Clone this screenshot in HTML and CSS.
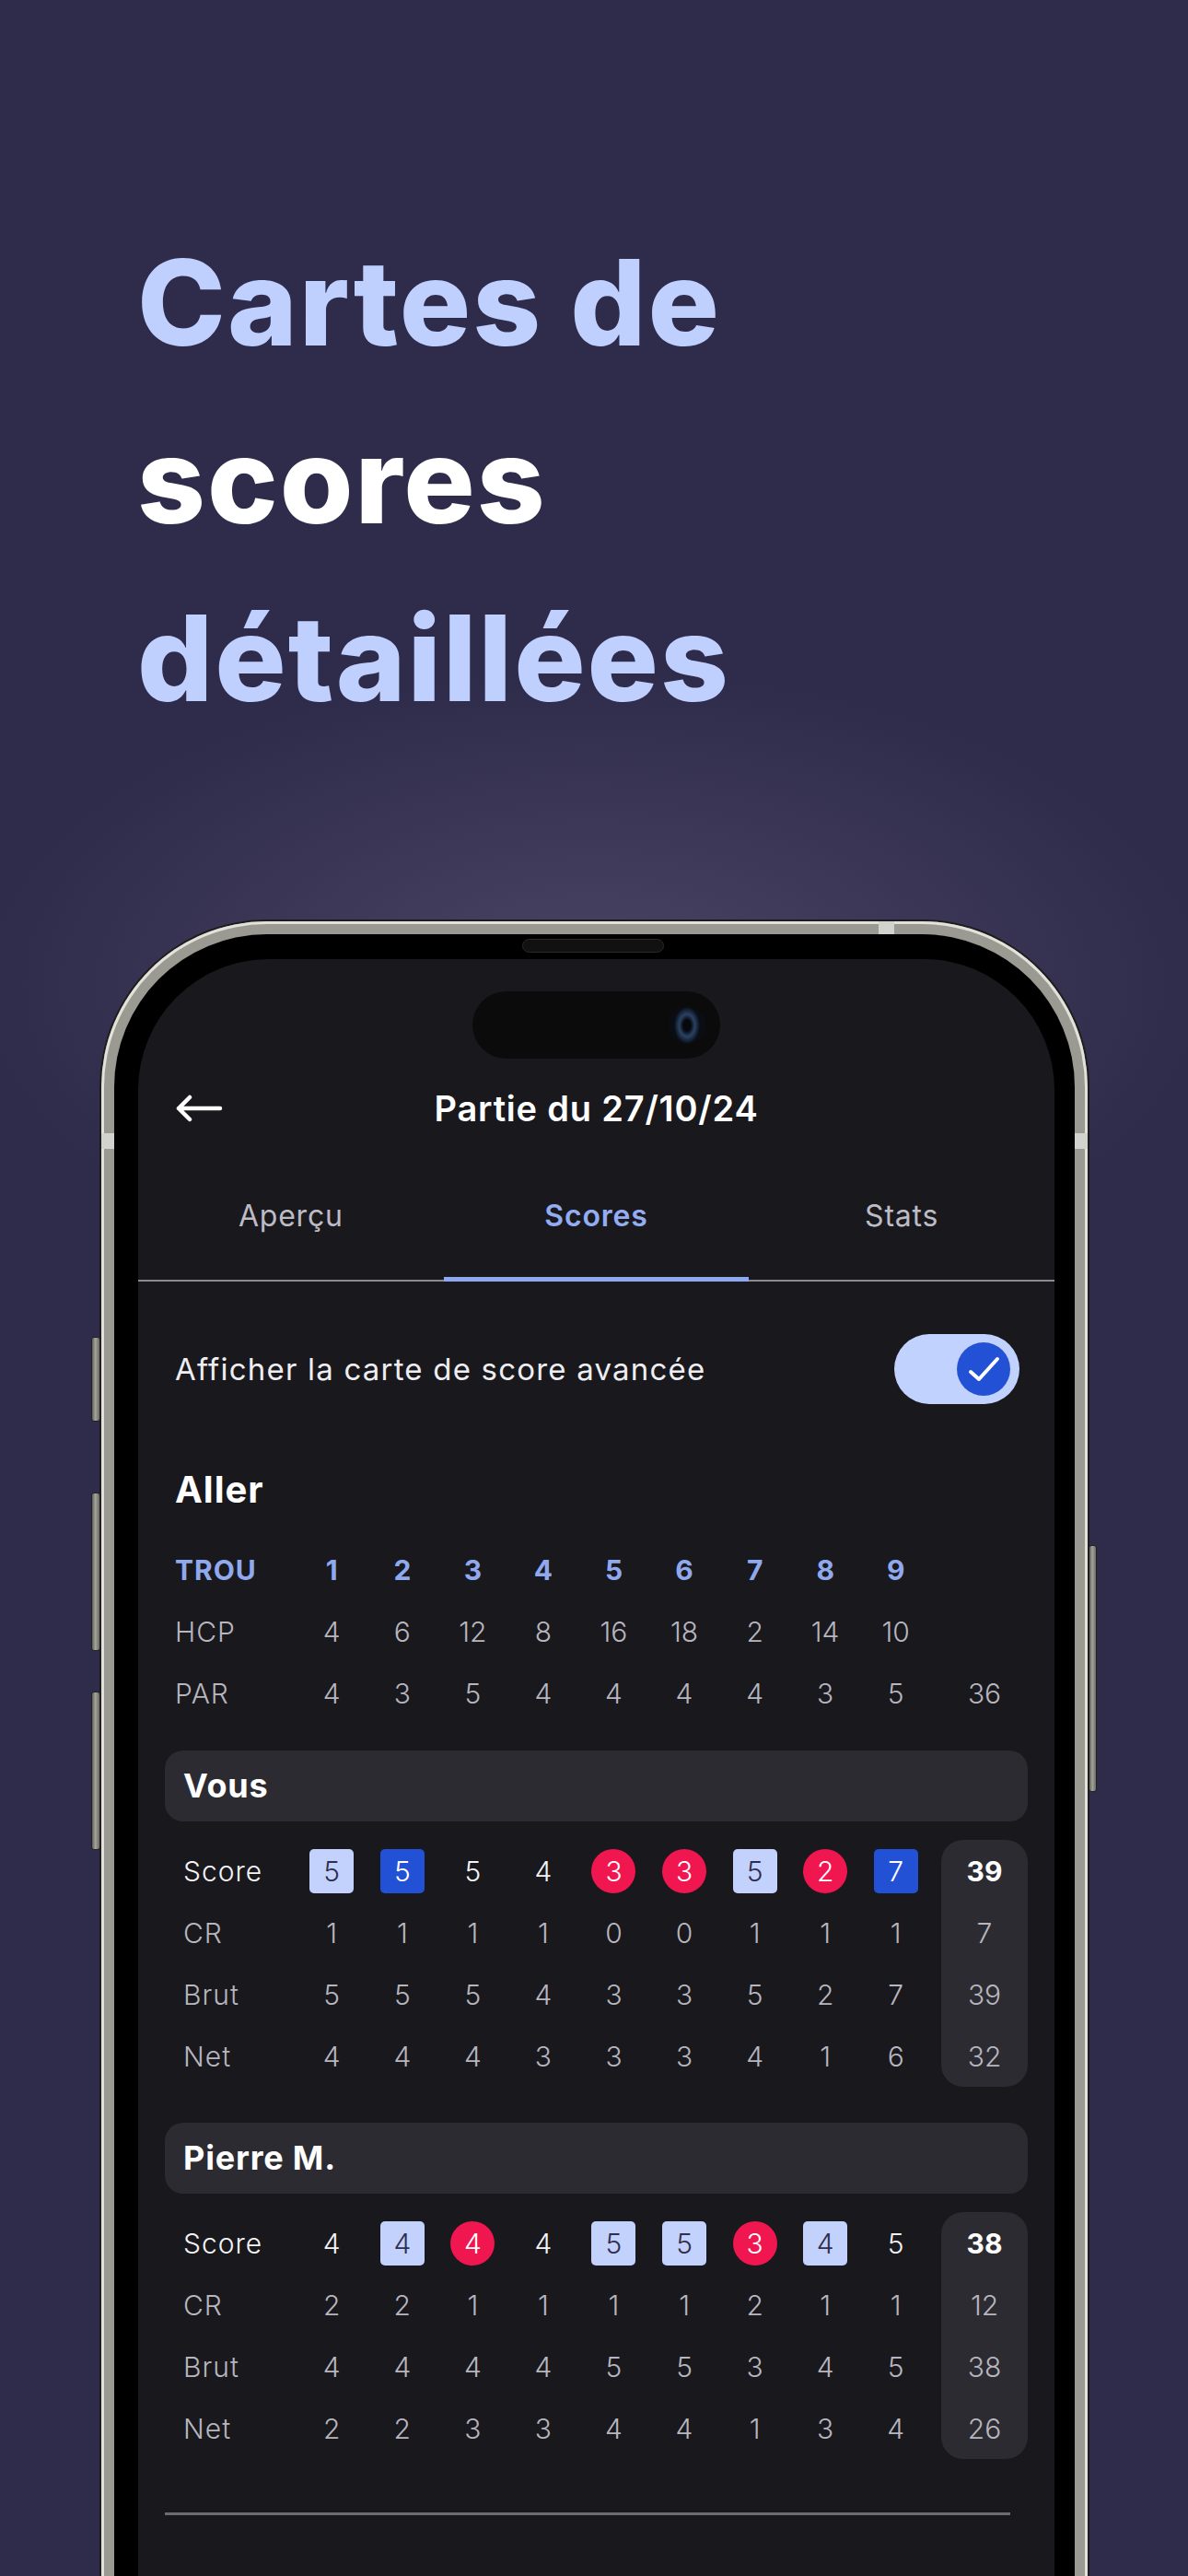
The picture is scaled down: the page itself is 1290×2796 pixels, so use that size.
FILE: index.html
```html
<!DOCTYPE html>
<html lang="fr">
<head>
    <meta charset="UTF-8">
    <meta name="viewport" content="width=device-width, initial-scale=1.0">
    <title>Cartes de scores détaillées</title>
    <link rel="stylesheet" href="styles.css">
</head>
<body>
    <div class="hero">
        <h1 class="headline"><span class="accent">Cartes de</span><br>scores<br><span class="accent">détaillées</span></h1>
    </div>

    <div class="phone">
        <span class="side-btn btn-1"></span>
        <span class="side-btn btn-2"></span>
        <span class="side-btn btn-3"></span>
        <span class="side-btn btn-power"></span>
        <span class="band band-top"></span>
        <span class="band band-left"></span>
        <span class="band band-right"></span>
        <span class="speaker"></span>

        <div class="bezel">
            <div class="screen">
                <div class="island"><span class="lens"></span></div>

                <div class="topbar">
                    <svg class="back" width="52" height="30" viewBox="0 0 52 30">
                        <path d="M3 15 H48 M3 15 L15 3 M3 15 L15 27" fill="none" stroke="#fff" stroke-width="4.5" stroke-linecap="round" stroke-linejoin="round"/>
                    </svg>
                    <div class="topbar-title">Partie du 27/10/24</div>
                    <span></span>
                </div>

                <div class="tabs">
                    <div class="tab">Aperçu</div>
                    <div class="tab active">Scores</div>
                    <div class="tab">Stats</div>
                </div>

                <div class="content">
                    <div class="toggle-row">
                        <span>Afficher la carte de score avancée</span>
                        <span class="switch">
                            <span class="knob">
                                <svg width="58" height="58" viewBox="0 0 58 58">
                                    <path d="M15 32 L24 40 L44 18" fill="none" stroke="#fff" stroke-width="4" stroke-linecap="round" stroke-linejoin="round"/>
                                </svg>
                            </span>
                        </span>
                    </div>

                    <h2 class="section">Aller</h2>

                    <!-- trous -->
                    <div class="grid holes">
                        <div class="lbl hole">TROU</div>
                        <div class="hole">1</div><div class="hole">2</div><div class="hole">3</div>
                        <div class="hole">4</div><div class="hole">5</div><div class="hole">6</div>
                        <div class="hole">7</div><div class="hole">8</div><div class="hole">9</div>
                        <div></div>

                        <div class="lbl">HCP</div>
                        <div>4</div><div>6</div><div>12</div><div>8</div><div>16</div>
                        <div>18</div><div>2</div><div>14</div><div>10</div>
                        <div></div>

                        <div class="lbl">PAR</div>
                        <div>4</div><div>3</div><div>5</div><div>4</div><div>4</div>
                        <div>4</div><div>4</div><div>3</div><div>5</div>
                        <div class="sum">36</div>
                    </div>

                    <div class="player">Vous</div>
                    <div class="grid card-grid">
                        <div class="lbl score">Score</div>
                        <div><span class="b light">5</span></div>
                        <div><span class="b dark">5</span></div>
                        <div class="score">5</div>
                        <div class="score">4</div>
                        <div><span class="b red">3</span></div>
                        <div><span class="b red">3</span></div>
                        <div><span class="b light">5</span></div>
                        <div><span class="b red">2</span></div>
                        <div><span class="b dark">7</span></div>
                        <div class="tot first strong">39</div>

                        <div class="lbl">CR</div>
                        <div>1</div><div>1</div><div>1</div><div>1</div><div>0</div>
                        <div>0</div><div>1</div><div>1</div><div>1</div>
                        <div class="tot">7</div>

                        <div class="lbl">Brut</div>
                        <div>5</div><div>5</div><div>5</div><div>4</div><div>3</div>
                        <div>3</div><div>5</div><div>2</div><div>7</div>
                        <div class="tot">39</div>

                        <div class="lbl">Net</div>
                        <div>4</div><div>4</div><div>4</div><div>3</div><div>3</div>
                        <div>3</div><div>4</div><div>1</div><div>6</div>
                        <div class="tot last">32</div>
                    </div>

                    <div class="player spaced">Pierre M.</div>
                    <div class="grid card-grid">
                        <div class="lbl score">Score</div>
                        <div class="score">4</div>
                        <div><span class="b light">4</span></div>
                        <div><span class="b red">4</span></div>
                        <div class="score">4</div>
                        <div><span class="b light">5</span></div>
                        <div><span class="b light">5</span></div>
                        <div><span class="b red">3</span></div>
                        <div><span class="b light">4</span></div>
                        <div class="score">5</div>
                        <div class="tot first strong">38</div>

                        <div class="lbl">CR</div>
                        <div>2</div><div>2</div><div>1</div><div>1</div><div>1</div>
                        <div>1</div><div>2</div><div>1</div><div>1</div>
                        <div class="tot">12</div>

                        <div class="lbl">Brut</div>
                        <div>4</div><div>4</div><div>4</div><div>4</div><div>5</div>
                        <div>5</div><div>3</div><div>4</div><div>5</div>
                        <div class="tot">38</div>

                        <div class="lbl">Net</div>
                        <div>2</div><div>2</div><div>3</div><div>3</div><div>4</div>
                        <div>4</div><div>1</div><div>3</div><div>4</div>
                        <div class="tot last">26</div>
                    </div>

                    <div class="divider"></div>
                </div>
            </div>
        </div>
    </div>
</body>
</html>
```

FILE: styles.css
```css
* {
    box-sizing: border-box;
}
body {
    margin: 0;
    width: 1290px;
    height: 2796px;
    overflow: hidden;
    font-family: "Inter", "Noto Sans", sans-serif;
    background-color: #2f2b4b;
    background-image: radial-gradient(660px 340px at 645px 1070px, rgba(76, 70, 102, 0.95), rgba(47, 43, 75, 0) 100%);
}

/* titre */
.hero {
    padding: 232px 0 0 149px;
}
.headline {
    margin: 0;
    font-size: 129px;
    font-weight: 800;
    line-height: 193px;
    letter-spacing: 2px;
    color: #ffffff;
}
.accent {
    color: #bfd0fe;
}

/* telephone */
.phone {
    position: relative;
    width: 1071px;
    height: 1820px;
    margin: 189px 0 0 110px;
    padding: 14px 14px 0;
    background: #9a9a92;
    border-radius: 180px 180px 0 0;
    box-shadow: 0 0 0 2px #1d1d1d, inset 0 0 0 3px #e2e2da;
}
.side-btn {
    position: absolute;
    width: 10px;
    background: linear-gradient(to right, #5d5d58, #a4a49c 45%, #6b6b65);
    border: 1px solid #222;
    border-radius: 3px;
}
.btn-1 { left: -11px; top: 451px; height: 92px; }
.btn-2 { left: -11px; top: 620px; height: 172px; }
.btn-3 { left: -11px; top: 836px; height: 172px; }
.btn-power { left: 1072px; top: 677px; height: 268px; width: 9px; }
.band {
    position: absolute;
    background: #d2d2ce;
}
.band-top { left: 844px; top: 0; width: 17px; height: 14px; }
.band-left { left: 0; top: 230px; width: 14px; height: 17px; }
.band-right { right: 0; top: 230px; width: 14px; height: 17px; }
.speaker {
    position: absolute;
    left: 457px;
    top: 19px;
    width: 154px;
    height: 15px;
    background: #111;
    border: 1px solid #2a2a2a;
    border-radius: 8px;
}
.bezel {
    height: 100%;
    padding: 27px 22px 0 26px;
    background: #000;
    border-radius: 166px 166px 0 0;
}
.screen {
    height: 100%;
    padding-top: 35px;
    background: #19181d;
    border-radius: 142px 142px 0 0;
    color: #f2f2f5;
}

/* ilot */
.island {
    display: flex;
    align-items: center;
    justify-content: flex-end;
    width: 269px;
    height: 73px;
    margin: 0 auto;
    padding-right: 16px;
    background: #0b0b0c;
    border-radius: 37px;
}
.lens {
    width: 40px;
    height: 40px;
    border-radius: 50%;
    background: radial-gradient(ellipse 14px 20px at 50% 50%, #06080c 30%, #2a4263 60%, #152236 85%, #0a0d14 100%);
}

/* barre du haut */
.topbar {
    display: grid;
    grid-template-columns: 1fr auto 1fr;
    align-items: center;
    height: 68px;
    margin-top: 20px;
    padding: 0 41px;
}
.back {
    display: block;
}
.topbar-title {
    font-size: 38px;
    font-weight: 600;
    line-height: 68px;
    letter-spacing: 0.8px;
    color: #ffffff;
}

/* onglets */
.tabs {
    display: grid;
    grid-template-columns: 1fr 1fr 1fr;
    border-bottom: 2px solid #8b8a92;
}
.tab {
    padding: 58px 0 44px;
    font-size: 32px;
    line-height: 50px;
    letter-spacing: 0.8px;
    text-align: center;
    color: #bdbcc5;
}
.tab.active {
    font-weight: 600;
    color: #93acf2;
    box-shadow: inset 0 -3px 0 #8ea8ef, 0 2px 0 #8ea8ef;
}

/* contenu */
.content {
    padding: 0 29px;
}
.toggle-row {
    display: flex;
    align-items: center;
    justify-content: space-between;
    height: 76px;
    margin-top: 57px;
    padding: 0 9px 0 11px;
    font-size: 33px;
    letter-spacing: 1.2px;
    color: #eeeef2;
}
.switch {
    display: flex;
    align-items: center;
    justify-content: flex-end;
    width: 136px;
    height: 76px;
    padding-right: 10px;
    background: #c2d2fe;
    border-radius: 38px;
}
.knob {
    width: 58px;
    height: 58px;
    border-radius: 50%;
    background: #2251d6;
}
.knob svg {
    display: block;
}
.section {
    margin: 65px 0 0;
    padding-left: 11px;
    font-size: 40px;
    font-weight: 700;
    line-height: 56px;
    letter-spacing: 1px;
    color: #ffffff;
}

/* grilles */
.grid {
    display: grid;
    grid-template-columns: 143px repeat(9, 1fr) 105px;
    grid-auto-rows: 67px;
    font-size: 30px;
    font-weight: 300;
    color: #b7b6bf;
}
.grid > div {
    display: flex;
    align-items: center;
    justify-content: center;
}
.grid > .lbl {
    justify-content: flex-start;
    padding-left: 11px;
    letter-spacing: 1px;
}
.holes {
    margin-top: 25px;
}
.hole {
    font-weight: 700;
    color: #90a9ee;
}
.card-grid {
    margin-top: 20px;
}
.card-grid > .lbl {
    padding-left: 20px;
}
.score {
    color: #f4f4f7;
}
.sum {
    margin-left: 11px;
}
.tot {
    margin-left: 11px;
    background: #2c2b31;
}
.tot.first {
    border-radius: 24px 24px 0 0;
}
.tot.last {
    border-radius: 0 0 24px 24px;
}
.strong {
    font-weight: 700;
    color: #ffffff;
}
.b {
    display: flex;
    align-items: center;
    justify-content: center;
    width: 48px;
    height: 48px;
    border-radius: 5px;
}
.b.light {
    background: #c3d2fd;
    color: #302e4e;
}
.b.dark {
    background: #2251d6;
    color: #ffffff;
}
.b.red {
    background: #f01650;
    color: #ffffff;
    border-radius: 50%;
}
.player {
    height: 77px;
    margin-top: 29px;
    padding-left: 20px;
    font-size: 36px;
    font-weight: 700;
    line-height: 77px;
    letter-spacing: 0.8px;
    color: #ffffff;
    background: #2c2b31;
    border-radius: 20px;
}
.player.spaced {
    margin-top: 39px;
}
.divider {
    width: 918px;
    height: 3px;
    margin-top: 58px;
    background: #6c6b72;
}
```
